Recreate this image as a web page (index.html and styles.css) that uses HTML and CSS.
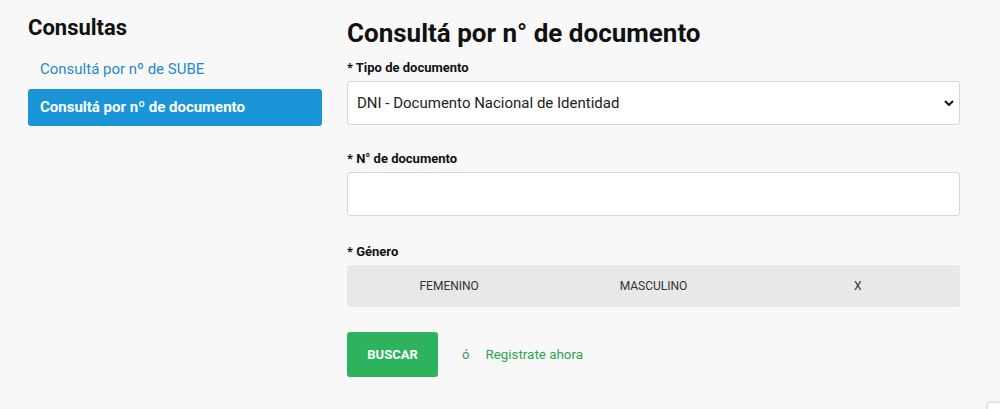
FILE: index.html
```html
<!DOCTYPE html>
<html lang="es">
<head>
  <meta charset="UTF-8">
  <title>SUBE - Consultas</title>
  <link rel="stylesheet" href="styles.css">
</head>
<body>

<div class="page">
  <!-- Menu lateral -->
  <div class="sidebar">
    <h3>Consultas</h3>
    <a href="#" class="side-link">Consultá por nº de SUBE</a>
    <a href="#" class="side-link active">Consultá por nº de documento</a>
  </div>

  <!-- Formulario -->
  <div class="main">
    <h1>Consultá por n° de documento</h1>

    <label class="field-label" for="tipo">* Tipo de documento</label>
    <select id="tipo" class="field">
      <option>DNI - Documento Nacional de Identidad</option>
      <option>LC - Libreta Cívica</option>
      <option>LE - Libreta de Enrolamiento</option>
      <option>Pasaporte</option>
    </select>

    <label class="field-label" for="numero">* N° de documento</label>
    <input type="text" id="numero" class="field">

    <label class="field-label">* Género</label>
    <div class="genero">
      <button type="button">FEMENINO</button>
      <button type="button">MASCULINO</button>
      <button type="button">X</button>
    </div>

    <div class="actions">
      <button type="button" class="btn-buscar">BUSCAR</button>
      <span class="sep">ó</span>
      <a href="#" class="registro">Registrate ahora</a>
    </div>
  </div>
</div>

<div class="badge"></div>

</body>
</html>
```

FILE: styles.css
```css
* {
  box-sizing: border-box;
}
body {
  margin: 0;
  font-family: Roboto, 'Liberation Sans', sans-serif;
  background: #f8f8f8;
  color: #111;
  overflow: hidden;
}
.page {
  display: flex;
  padding: 14px 40px 0 28px;
}
.sidebar {
  width: 294px;
  flex-shrink: 0;
}
.sidebar h3 {
  margin: 0 0 9px;
  font-size: 22px;
  font-weight: 700;
  line-height: 28px;
  color: #111;
}
.side-link {
  display: block;
  padding: 9px 12px;
  font-size: 15px;
  line-height: 19px;
  color: #1f8acb;
  text-decoration: none;
  border-radius: 3px;
}
.side-link.active {
  margin-top: 1px;
  background: #1a96d8;
  color: #fff;
  font-weight: 700;
}
.main {
  flex: 1;
  margin-left: 25px;
}
.main h1 {
  margin: 3px 0 11px;
  font-size: 26px;
  font-weight: 700;
  line-height: 32px;
  color: #111;
}
.field-label {
  display: block;
  font-size: 13px;
  font-weight: 700;
  line-height: 16px;
  margin-bottom: 5px;
  color: #111;
}
.field {
  display: block;
  width: 100%;
  height: 44px;
  margin-bottom: 28px;
  padding: 0 9px;
  border: 1px solid #d6d6d6;
  border-radius: 3px;
  background: #fff;
  font-family: Roboto, 'Liberation Sans', sans-serif;
  font-size: 15px;
  color: #222;
}
select.field {
  margin-bottom: 26px;
  appearance: none;
  background-image: url("data:image/svg+xml;utf8,<svg xmlns='http://www.w3.org/2000/svg' width='10' height='6' viewBox='0 0 10 6'><path d='M1 1l4 4 4-4' fill='none' stroke='%23111' stroke-width='2'/></svg>");
  background-repeat: no-repeat;
  background-position: right 5px center;
  padding-right: 24px;
}
.genero {
  display: grid;
  grid-template-columns: 1fr 1fr 1fr;
  height: 42px;
  background: #e8e8e8;
  border-radius: 3px;
  margin-bottom: 25px;
}
.genero button {
  border: none;
  background: none;
  font-family: Roboto, 'Liberation Sans', sans-serif;
  font-size: 12px;
  color: #333;
  cursor: pointer;
}
.actions {
  display: flex;
  align-items: center;
}
.btn-buscar {
  width: 91px;
  height: 45px;
  border: none;
  border-radius: 3px;
  background: #2db35d;
  color: #fff;
  font-family: Roboto, 'Liberation Sans', sans-serif;
  font-weight: 700;
  font-size: 13px;
  cursor: pointer;
}
.sep {
  margin-left: 24px;
  font-size: 13px;
  color: #2aa651;
}
.registro {
  margin-left: 16px;
  font-size: 13.4px;
  color: #2aa651;
  text-decoration: none;
}
.badge {
  position: absolute;
  left: 987px;
  top: 402px;
  width: 60px;
  height: 60px;
  background: #fff;
  border: 1px solid #ddd;
  border-radius: 3px;
  box-shadow: 0 0 3px rgba(0,0,0,0.15);
}
```
